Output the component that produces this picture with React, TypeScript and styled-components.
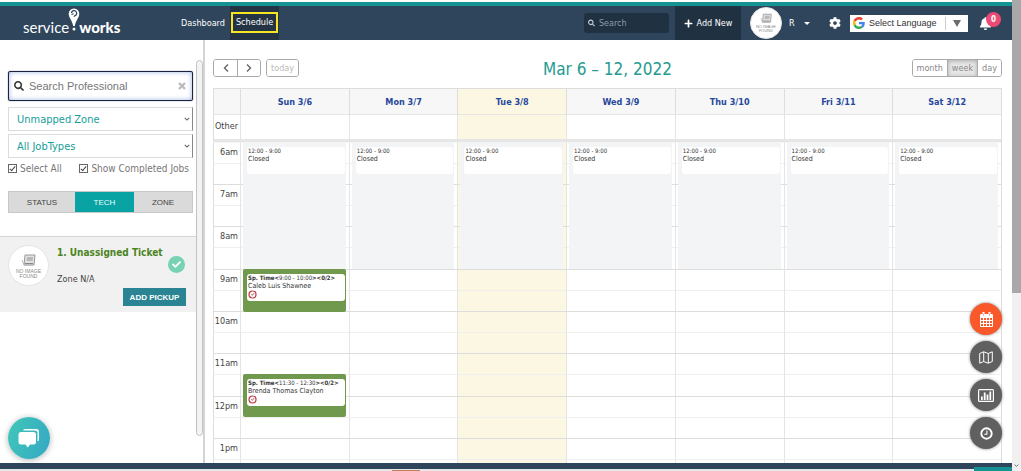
import React from "react";
import styled, { createGlobalStyle, css } from "styled-components";
import { FaSearch, FaPlus, FaCog, FaBell, FaCheck } from "react-icons/fa";

const GlobalStyle = createGlobalStyle`
  *, *::before, *::after { box-sizing: border-box; }
  body {
    margin: 0;
    background: #fff;
    color: #444;
    font-family: "DejaVu Sans Condensed", "Noto Sans", sans-serif;
    font-size: 9px;
    overflow: hidden;
  }
  button, input, select { font: inherit; color: inherit; margin: 0; }
  button { cursor: pointer; }
`;

const Screen = styled.div`
  display: grid;
  grid-template-columns: minmax(0, 1fr) 9px;
  height: 100vh;
`;

const Page = styled.div`
  display: flex;
  flex-direction: column;
  min-width: 0;
  height: 100vh;
`;

/* ---------- top bar ---------- */

const TopBar = styled.header`
  flex: none;
  display: flex;
  align-items: stretch;
  height: 38px;
  margin-top: 2px;
  background: #2f455b;
  border-top: 4px solid #159393;
  color: #fff;
`;

const Logo = styled.a`
  display: flex;
  align-items: center;
  width: 151px;
  padding: 8px 0 0 23px;
  color: #fff;
  font-family: Lato, sans-serif;
  font-size: 15px;
  line-height: 16px;
  text-decoration: none;
  b { font-weight: 900; }
  svg { margin: -16px -1px 0; }
`;

const Nav = styled.nav`
  display: flex;
  align-items: center;
  gap: 5px;
  padding-left: 30px;
`;

const NavLink = styled.a<{ $active?: boolean }>`
  display: flex;
  align-items: center;
  height: 100%;
  padding-bottom: 1px;
  color: #fff;
  font-size: 9px;
  text-decoration: none;
  ${(p) => p.$active && css`
    padding: 0 1px 1px;
    background: #243444;
    span { padding: 1px 3px 2px; border: 2px solid #f5e522; line-height: 14px; }
  `}
`;

const TopTools = styled.div`
  display: flex;
  align-items: center;
  margin-left: auto;
  padding-right: 20px;
`;

const TopSearch = styled.label`
  display: flex;
  align-items: center;
  gap: 4px;
  width: 85px;
  height: 20px;
  margin-right: 6px;
  padding: 0 4px;
  background: #203142;
  border-radius: 3px;
  color: #c5cdd4;
  input {
    min-width: 0;
    width: 100%;
    padding: 0;
    border: 0;
    outline: 0;
    background: none;
    font-size: 9px;
  }
  input::placeholder { color: #8e9ba7; opacity: 1; }
`;

const AddNew = styled.button`
  display: flex;
  align-items: center;
  justify-content: center;
  gap: 4px;
  width: 66px;
  height: 100%;
  padding: 0;
  border: 0;
  background: #203142;
  color: #fff;
  font-size: 9px;
`;

const Account = styled.button`
  display: flex;
  align-items: center;
  gap: 7px;
  width: 79px;
  margin-left: 9px;
  padding: 0;
  border: 0;
  background: none;
  color: #fff;
  font-size: 9px;
`;

const Caret = styled.i`
  margin-left: 2px;
  border: 3px solid transparent;
  border-top-color: #fff;
  border-bottom: 0;
`;

const Avatar = styled.span<{ $size: number }>`
  flex: none;
  display: flex;
  flex-direction: column;
  align-items: center;
  justify-content: center;
  width: ${(p) => p.$size}px;
  height: ${(p) => p.$size}px;
  border: 1px solid #e4e4e4;
  border-radius: 50%;
  background: #fff;
  color: #888;
  font-family: "Liberation Sans", sans-serif;
  font-size: ${(p) => (p.$size > 36 ? 5 : 4)}px;
  line-height: 1;
  text-align: center;
`;

const IconButton = styled.button`
  position: relative;
  display: flex;
  padding: 0;
  border: 0;
  background: none;
  color: #fff;
`;

const Language = styled.label`
  display: flex;
  align-items: center;
  width: 118px;
  height: 17px;
  margin: 0 11px 0 9px;
  padding-left: 3px;
  background: #fff;
  color: #555;
  select {
    flex: 1;
    min-width: 0;
    height: 13px;
    margin-left: 4px;
    padding: 0;
    appearance: none;
    border: 0;
    border-right: 1px solid #ccc;
    background: none;
    color: #333;
    font-family: "Liberation Sans", sans-serif;
    font-size: 9px;
    line-height: 13px;
  }
`;

const DownMark = styled.i`
  margin: 0 7px;
  border: 4px solid transparent;
  border-top: 7px solid #6c6c6c;
  border-bottom: 0;
`;

const Badge = styled.span`
  position: absolute;
  top: -5px;
  left: 7px;
  width: 15px;
  height: 15px;
  border-radius: 50%;
  background: #ec4a75;
  font-size: 8px;
  font-weight: 700;
  line-height: 15px;
  text-align: center;
`;

/* ---------- sidebar ---------- */

const Body = styled.div`
  flex: 1;
  display: flex;
  min-height: 0;
`;

const Sidebar = styled.aside`
  flex: none;
  display: flex;
  width: 205px;
  border-right: 2px solid #d4d4d4;
`;

const SideContent = styled.div`
  flex: 1;
  min-width: 0;
  padding-top: 31px;
`;

const SideScroll = styled.div`
  width: 7px;
  margin: 20px 0 27px;
  border: 1px solid #c3c3c3;
  border-radius: 4px;
  background: #f3f3f3;
`;

const Filters = styled.form`
  display: flex;
  flex-direction: column;
  padding: 0 3px 0 8px;
`;

const ProSearch = styled.label`
  display: flex;
  align-items: center;
  gap: 5px;
  height: 30px;
  margin-bottom: 6px;
  padding: 0 6px 0 5px;
  border: 1px solid #1b2540;
  border-radius: 2px;
  box-shadow: inset 0 0 5px #9fb2e0, 0 0 1px #1b2540;
  color: #333;
  input {
    flex: 1;
    min-width: 0;
    padding: 0;
    border: 0;
    outline: 0;
    background: none;
    font-family: "Liberation Sans", sans-serif;
    font-size: 11px;
  }
  input::placeholder { color: #777; opacity: 1; }
`;

const SelectBox = styled.label`
  display: flex;
  align-items: center;
  height: 24px;
  margin-bottom: 3px;
  padding: 0 2px 0 8px;
  border: 1px solid #dcdcdc;
  border-right-color: #888;
  select {
    flex: 1;
    min-width: 0;
    padding: 0;
    appearance: none;
    border: 0;
    background: none;
    color: #169e98;
    font-size: 11px;
  }
`;

const Checks = styled.div`
  display: flex;
  justify-content: space-between;
  height: 14px;
  margin-bottom: 16px;
  padding-right: 4px;
`;

const Check = styled.label`
  display: flex;
  align-items: center;
  gap: 3px;
  color: #777;
  font-size: 10px;
  white-space: nowrap;
  input {
    display: flex;
    align-items: center;
    justify-content: center;
    width: 9px;
    height: 9px;
    appearance: none;
    border: 1px solid #666;
  }
  input:checked::after {
    content: "";
    width: 3px;
    height: 6px;
    border: solid #444;
    border-width: 0 1px 1px 0;
    transform: rotate(40deg);
  }
`;

const Tabs = styled.div`
  display: grid;
  grid-template-columns: 66px 59px 1fr;
  height: 22px;
  margin-bottom: 23px;
  border: 1px solid #c8c8c8;
`;

const Tab = styled.button<{ $active?: boolean }>`
  padding: 0;
  border: 0;
  background: ${(p) => (p.$active ? "#0aa3a3" : "#dadada")};
  color: ${(p) => (p.$active ? "#e8ffff" : "#444")};
  font-family: "Liberation Sans", sans-serif;
  font-size: 8px;
`;

const Ticket = styled.section`
  display: grid;
  grid-template-columns: 41px 1fr 18px;
  grid-template-rows: 43px auto;
  align-content: start;
  column-gap: 8px;
  height: 76px;
  padding: 8px 10px 0 8px;
  border-top: 1px solid #d5d5d5;
  background: #f1f1f1;
`;

const TicketText = styled.div`
  min-width: 0;
  h2 {
    margin: 1px 0 14px;
    color: #4b8422;
    font-size: 10px;
    line-height: 13px;
    white-space: nowrap;
  }
  p { margin: 0; font-size: 9px; line-height: 13px; }
`;

const Done = styled.span`
  display: flex;
  align-items: center;
  justify-content: center;
  width: 17px;
  height: 17px;
  margin-top: 11px;
  border-radius: 50%;
  background: #76d1b5;
  color: #fff;
`;

const Pickup = styled.button`
  grid-column: 1 / -1;
  justify-self: end;
  width: 63px;
  height: 18px;
  padding: 0;
  border: 0;
  background: #2a8493;
  color: #fff;
  font-family: "Liberation Sans", sans-serif;
  font-size: 8px;
  font-weight: 700;
  white-space: nowrap;
`;

/* ---------- calendar ---------- */

const Main = styled.main`
  flex: 1;
  min-width: 0;
  padding: 18px 10px 0 8px;
  overflow: hidden;
`;

const Toolbar = styled.div`
  display: grid;
  grid-template-columns: 1fr auto 1fr;
  align-items: center;
  height: 22px;
  margin-bottom: 8px;
  h1 {
    margin: 0;
    color: #249a92;
    font-size: 17px;
    font-weight: 400;
    line-height: 22px;
  }
`;

const ToolSide = styled.div<{ $end?: boolean }>`
  display: flex;
  gap: 5px;
  margin-top: -2px;
  justify-content: ${(p) => (p.$end ? "flex-end" : "flex-start")};
`;

const Group = styled.div`
  display: flex;
  height: 18px;
  border: 1px solid #aaa;
  border-radius: 3px;
  overflow: hidden;
`;

const GroupButton = styled.button<{ $on?: boolean }>`
  display: flex;
  align-items: center;
  justify-content: center;
  min-width: 23px;
  padding: 0 4px;
  border: 0;
  background: ${(p) => (p.$on ? "#e6e6e6" : "#fff")};
  box-shadow: ${(p) => (p.$on ? "inset 0 1px 4px #aaa" : "none")};
  color: #888;
  font-size: 9px;
  & + & { border-left: 1px solid #aaa; }
  &:disabled { color: #bbb; }
`;

const Table = styled.table`
  width: 100%;
  table-layout: fixed;
  border-collapse: separate;
  border-spacing: 0;
  border: solid #ddd;
  border-width: 1px 1px 0 0;
`;

const TimeCol = styled.col`
  width: 27px;
`;

const DayHead = styled.th<{ $today?: boolean }>`
  height: 25px;
  padding: 0;
  border-left: 1px solid #ddd;
  background: ${(p) => (p.$today ? "#fcf7e3" : "#f7f7f7")};
  color: #26489c;
  font-size: 9px;
  font-weight: 700;
`;

const SlotRow = styled.tr<{ $hour?: boolean }>`
  height: 21px;
  &:nth-child(6n) { height: 22px; }
  > * { border-top: 1px solid ${(p) => (p.$hour ? "#ddd" : "#efefef")}; }
  &:first-child > * { border-top-color: #f3f3f3; }
`;

const OtherRow = styled.tr`
  height: 28px;
  > * {
    border-top: 1px solid #e4e4e4;
    border-bottom: 3px solid #e6e6e6;
  }
`;

const TimeCell = styled.th`
  padding: 0 2px 2px 0;
  border-left: 1px solid #ddd;
  font-size: 9px;
  font-weight: 400;
  line-height: 12px;
  text-align: right;
`;

const DayCell = styled.td<{ $today?: boolean }>`
  position: relative;
  padding: 0;
  border-left: 1px solid #e4e4e4;
  background: ${(p) => (p.$today ? "#fcf7e3" : "#fff")};
`;

const Event = styled.article<{ $job?: boolean }>`
  position: absolute;
  z-index: 1;
  top: -1px;
  left: 2px;
  right: 3px;
  height: ${(p) => (p.$job ? 43 : 127)}px;
  padding: 5px 1px 0 4px;
  border-radius: ${(p) => (p.$job ? 2 : 0)}px;
  background: ${(p) => (p.$job ? "#70994d" : "#f3f4f5")};
`;

const EventCard = styled.div`
  height: 27px;
  padding: 0 1px;
  border-radius: 3px;
  background: #fff;
  color: #333;
  font-size: 7px;
  line-height: 8px;
  white-space: nowrap;
  header { font-size: 6px; }
  svg { display: block; }
`;

/* ---------- floating controls, footer, scrollbar ---------- */

const Fabs = styled.div`
  position: fixed;
  z-index: 3;
  right: 19px;
  bottom: 22px;
  display: flex;
  flex-direction: column;
  gap: 6px;
`;

const Fab = styled.button<{ $active?: boolean }>`
  display: flex;
  align-items: center;
  justify-content: center;
  width: 32px;
  height: 32px;
  padding: 0;
  border: 0;
  border-radius: 50%;
  background: ${(p) => (p.$active ? "#f9592a" : "#606060")};
  box-shadow: 0 0 3px #777;
  color: #fff;
`;

const Chat = styled.button`
  position: fixed;
  z-index: 3;
  left: 8px;
  bottom: 12px;
  display: flex;
  align-items: center;
  justify-content: center;
  width: 42px;
  height: 42px;
  padding: 0;
  border: 0;
  border-radius: 50%;
  background: linear-gradient(110deg, #40c7b8, #35a8c4);
  box-shadow: 0 1px 6px rgba(0, 0, 0, 0.3);
`;

const Footer = styled.footer`
  flex: none;
  display: flex;
  align-items: flex-end;
  justify-content: space-between;
  height: 8px;
  background: linear-gradient(#2f455b 6px, #e4e8ea 6px);
`;

const FooterMark = styled.span<{ $orange?: boolean }>`
  width: ${(p) => (p.$orange ? 28 : 38)}px;
  height: ${(p) => (p.$orange ? 1 : 4)}px;
  margin-left: ${(p) => (p.$orange ? "38.7%" : "0")};
  background: ${(p) => (p.$orange ? "#c08055" : "#159393")};
`;

const PageScroll = styled.div`
  display: flex;
  flex-direction: column;
  align-items: center;
  justify-content: space-between;
  padding-bottom: 3px;
  background: #f0f0f0;
  i { width: 100%; height: 62.5%; background: #a8a8a8; }
`;

const NoImage = ({ size }: { size: number }) => (
  <Avatar $size={size}>
    <svg width={size > 36 ? 16 : 13} height={size > 36 ? 16 : 12} viewBox="0 0 16 15" aria-hidden="true">
      <path d="M4 1.5h10l-1 10H3z" fill="#e2e2e2" stroke="#999" />
      <path d="M6 3.5h6l-.5 4h-6z" fill="#b9b9b9" />
      <path d="M1 6.500l2 5h9" fill="none" stroke="#bbb" />
      <path d="M4 10h8" stroke="#888" />
    </svg>
    <span>NO IMAGE</span>
    <span>FOUND</span>
  </Avatar>
);

const Chevron = ({ dir = "down", size = 6 }: { dir?: "down" | "left" | "right"; size?: number }) => (
  <svg width={size} height={size} viewBox="0 0 8 8" fill="none" stroke="#666" strokeWidth="1.400" aria-hidden="true">
    <path d={dir === "down" ? "M1 2.500l3 3 3-3" : dir === "left" ? "M6 .5L2.500 4 6 7.500" : "M2 .5L5.500 4 2 7.500"} />
  </svg>
);

const Clock = () => (
  <svg width="9" height="9" viewBox="0 0 9 9" fill="none" stroke="#c33b45" aria-hidden="true">
    <circle cx="4.500" cy="4.500" r="3.500" strokeWidth="1.200" />
    <path d="M3.200 4.300l1.200 1 1.700-2.200" strokeWidth=".9" />
  </svg>
);

const DAYS = ["Sun 3/6", "Mon 3/7", "Tue 3/8", "Wed 3/9", "Thu 3/10", "Fri 3/11", "Sat 3/12"];
const TODAY = 2;
const HOURS = ["6am", "7am", "8am", "9am", "10am", "11am", "12pm", "1pm"];
const JOBS: Record<string, { time: string; name: string }> = {
  "6-0": { time: "9:00 - 10:00", name: "Caleb Luis Shawnee" },
  "11-0": { time: "11:30 - 12:30", name: "Brenda Thomas Clayton" },
};

const Slot = ({ slot, day }: { slot: number; day: number }) => {
  const job = JOBS[`${slot}-${day}`];
  return (
    <DayCell $today={day === TODAY}>
      {slot === 0 && (
        <Event>
          <EventCard><header>12:00 - 9:00</header>Closed</EventCard>
        </Event>
      )}
      {job && (
        <Event $job>
          <EventCard>
            <header><b>Sp. Time&lt;</b>{job.time}<b>&gt;&lt;0/2&gt;</b></header>
            {job.name}
            <Clock />
          </EventCard>
        </Event>
      )}
    </DayCell>
  );
};

export default function App() {
  return (
    <>
      <GlobalStyle />
      <Screen>
        <Page>
          <TopBar>
            <Logo href="#" aria-label="service works">
              <span>service</span>
              <svg width="12" height="23" viewBox="0 0 12 23" aria-hidden="true">
                <path d="M6 .5a5.300 5.300 0 0 0-5.300 5.300C.7 9.500 4 12 5.200 18h1.600C8 12 11.300 9.500 11.300 5.800A5.300 5.300 0 0 0 6 .5z" fill="#fff" />
                <path d="M3.500 5a2.600 2.600 0 1 1 3.400 2.700L5.800 8.500M3.500 6.500l2-.8" fill="none" stroke="#2f455b" strokeWidth="1.200" />
                <circle cx="6" cy="21" r="1.500" fill="#fff" />
              </svg>
              <b>works</b>
            </Logo>
            <Nav>
              <NavLink href="#">Dashboard</NavLink>
              <NavLink href="#" $active><span>Schedule</span></NavLink>
            </Nav>
            <TopTools>
              <TopSearch>
                <FaSearch size={8} />
                <input type="search" placeholder="Search" aria-label="Search" />
              </TopSearch>
              <AddNew type="button"><FaPlus size={9} />Add New</AddNew>
              <Account type="button">
                <NoImage size={32} />
                R
                <Caret />
              </Account>
              <IconButton type="button" aria-label="Settings"><FaCog size={12} /></IconButton>
              <Language>
                <svg width="12" height="12" viewBox="0 0 48 48" aria-hidden="true">
                  <path fill="#EA4335" d="M24 9.500c3.540 0 6.710 1.220 9.210 3.600l6.850-6.850C35.900 2.380 30.470 0 24 0 14.620 0 6.510 5.380 2.560 13.220l7.980 6.190C12.430 13.720 17.740 9.500 24 9.500z" />
                  <path fill="#4285F4" d="M46.980 24.550c0-1.570-.15-3.090-.38-4.550H24v9.020h12.940c-.58 2.960-2.260 5.480-4.780 7.180l7.730 6c4.510-4.180 7.090-10.360 7.090-17.650z" />
                  <path fill="#FBBC05" d="M10.530 28.590A14.500 14.500 0 0 1 10.530 19.410l-7.980-6.190a24 24 0 0 0 0 21.560z" />
                  <path fill="#34A853" d="M24 48c6.480 0 11.930-2.130 15.890-5.810l-7.730-6c-2.150 1.450-4.920 2.300-8.160 2.300-6.260 0-11.570-4.220-13.470-9.910l-7.980 6.190C6.510 42.620 14.620 48 24 48z" />
                </svg>
                <select aria-label="Select Language"><option>Select Language</option></select>
                <DownMark />
              </Language>
              <IconButton type="button" aria-label="Notifications">
                <FaBell size={13} />
                <Badge>0</Badge>
              </IconButton>
            </TopTools>
          </TopBar>

          <Body>
            <Sidebar>
              <SideContent>
                <Filters>
                  <ProSearch>
                    <FaSearch size={10} />
                    <input placeholder="Search Professional" aria-label="Search Professional" />
                    <svg width="8" height="8" viewBox="0 0 8 8" stroke="#bbb" strokeWidth="2.400" aria-hidden="true">
                      <path d="M1 1l6 6M7 1L1 7" />
                    </svg>
                  </ProSearch>
                  <SelectBox>
                    <select aria-label="Zone"><option>Unmapped Zone</option></select>
                    <Chevron />
                  </SelectBox>
                  <SelectBox>
                    <select aria-label="Job type"><option>All JobTypes</option></select>
                    <Chevron />
                  </SelectBox>
                  <Checks>
                    <Check><input type="checkbox" defaultChecked />Select All</Check>
                    <Check><input type="checkbox" defaultChecked />Show Completed Jobs</Check>
                  </Checks>
                  <Tabs>
                    <Tab type="button">STATUS</Tab>
                    <Tab type="button" $active>TECH</Tab>
                    <Tab type="button">ZONE</Tab>
                  </Tabs>
                </Filters>
                <Ticket>
                  <NoImage size={41} />
                  <TicketText>
                    <h2>1. Unassigned Ticket</h2>
                    <p>Zone N/A</p>
                  </TicketText>
                  <Done><FaCheck size={9} /></Done>
                  <Pickup type="button">ADD PICKUP</Pickup>
                </Ticket>
              </SideContent>
              <SideScroll />
            </Sidebar>

            <Main>
              <Toolbar>
                <ToolSide>
                  <Group>
                    <GroupButton type="button" aria-label="Previous week"><Chevron dir="left" size={8} /></GroupButton>
                    <GroupButton type="button" aria-label="Next week"><Chevron dir="right" size={8} /></GroupButton>
                  </Group>
                  <Group><GroupButton type="button" disabled>today</GroupButton></Group>
                </ToolSide>
                <h1>Mar 6 – 12, 2022</h1>
                <ToolSide $end>
                  <Group>
                    <GroupButton type="button">month</GroupButton>
                    <GroupButton type="button" $on>week</GroupButton>
                    <GroupButton type="button">day</GroupButton>
                  </Group>
                </ToolSide>
              </Toolbar>
              <Table>
                <colgroup>
                  <TimeCol />
                  {DAYS.map((d) => <col key={d} />)}
                </colgroup>
                <thead>
                  <tr>
                    <DayHead as="td" />
                    {DAYS.map((d, i) => <DayHead key={d} $today={i === TODAY}>{d}</DayHead>)}
                  </tr>
                  <OtherRow>
                    <TimeCell>Other</TimeCell>
                    {DAYS.map((d, i) => <DayCell key={d} $today={i === TODAY} />)}
                  </OtherRow>
                </thead>
                <tbody>
                  {HOURS.flatMap((hour, h) => [0, 1].map((half) => (
                    <SlotRow key={`${hour}-${half}`} $hour={half === 0}>
                      <TimeCell>{half === 0 ? hour : null}</TimeCell>
                      {DAYS.map((d, i) => <Slot key={d} slot={h * 2 + half} day={i} />)}
                    </SlotRow>
                  )))}
                </tbody>
              </Table>
            </Main>
          </Body>
          <Footer><FooterMark $orange /><FooterMark /></Footer>
        </Page>
        <PageScroll><i /><Chevron size={5} /></PageScroll>
      </Screen>

      <Chat type="button" aria-label="Chat">
        <svg width="22" height="20" viewBox="0 0 22 20" fill="#fff" aria-hidden="true">
          <path d="M5 2.500Q5 1 7 1h11q3 0 3 3v7q0 2-1.500 2.500V5q0-2.500-2.500-2.500z" />
          <path d="M3 4h12.500Q18 4 18 6.500V14q0 2.500-2.500 2.500H12L9.800 19.500 7.500 16.500H3Q.5 16.500.5 14V6.500Q.5 4 3 4z" />
        </svg>
      </Chat>
      <Fabs>
        <Fab type="button" $active aria-label="Calendar">
          <svg width="15" height="15" viewBox="0 0 15 15" fill="#fff" aria-hidden="true">
            <path
              fillRule="evenodd"
              d="M2 2h11q1 0 1 1v11q0 1-1 1H2q-1 0-1-1V3q0-1 1-1zM2 6v2h2V6zM5 6v2h2V6zM8 6v2h2V6zM11 6v2h2V6zM2 9v2h2V9zM5 9v2h2V9zM8 9v2h2V9zM11 9v2h2V9zM2 12v2h2v-2zM5 12v2h2v-2zM8 12v2h2v-2zM11 12v2h2v-2z"
            />
            <path d="M3.500 0h2v4h-2zM9.500 0h2v4h-2z" />
            <path d="M4.500 1.500v2M10.500 1.500v2" stroke="#f9592a" strokeWidth=".6" />
          </svg>
        </Fab>
        <Fab type="button" aria-label="Map">
          <svg width="14" height="13" viewBox="0 0 14 13" fill="none" stroke="#fff" aria-hidden="true">
            <path d="M.7 2.500L4.700.8l4.600 1.700L13.300.8v9.700l-4 1.700-4.600-1.700-4 1.700zM4.700.8v9.700M9.300 2.500v9.700" />
          </svg>
        </Fab>
        <Fab type="button" aria-label="Reports">
          <svg width="16" height="13" viewBox="0 0 16 13" fill="#fff" aria-hidden="true">
            <path d="M1.500 0h13Q16 0 16 1.500v10q0 1.500-1.500 1.500h-13Q0 13 0 11.500v-10Q0 0 1.500 0zM1.200 1.200v10.600h13.600V1.200z" fillRule="evenodd" />
            <path d="M3 7.500h1.800V11H3zM5.800 3.500h1.800V11H5.800zM8.600 5.500h1.800V11H8.600zM11.400 2.500h1.800V11h-1.800z" />
          </svg>
        </Fab>
        <Fab type="button" aria-label="Recent">
          <svg width="13" height="13" viewBox="0 0 13 13" fill="none" stroke="#fff" aria-hidden="true">
            <circle cx="6.500" cy="6.500" r="5.200" strokeWidth="1.900" />
            <path d="M6.900 3.500v3.700H4.300" strokeWidth="1.100" />
          </svg>
        </Fab>
      </Fabs>
    </>
  );
}
